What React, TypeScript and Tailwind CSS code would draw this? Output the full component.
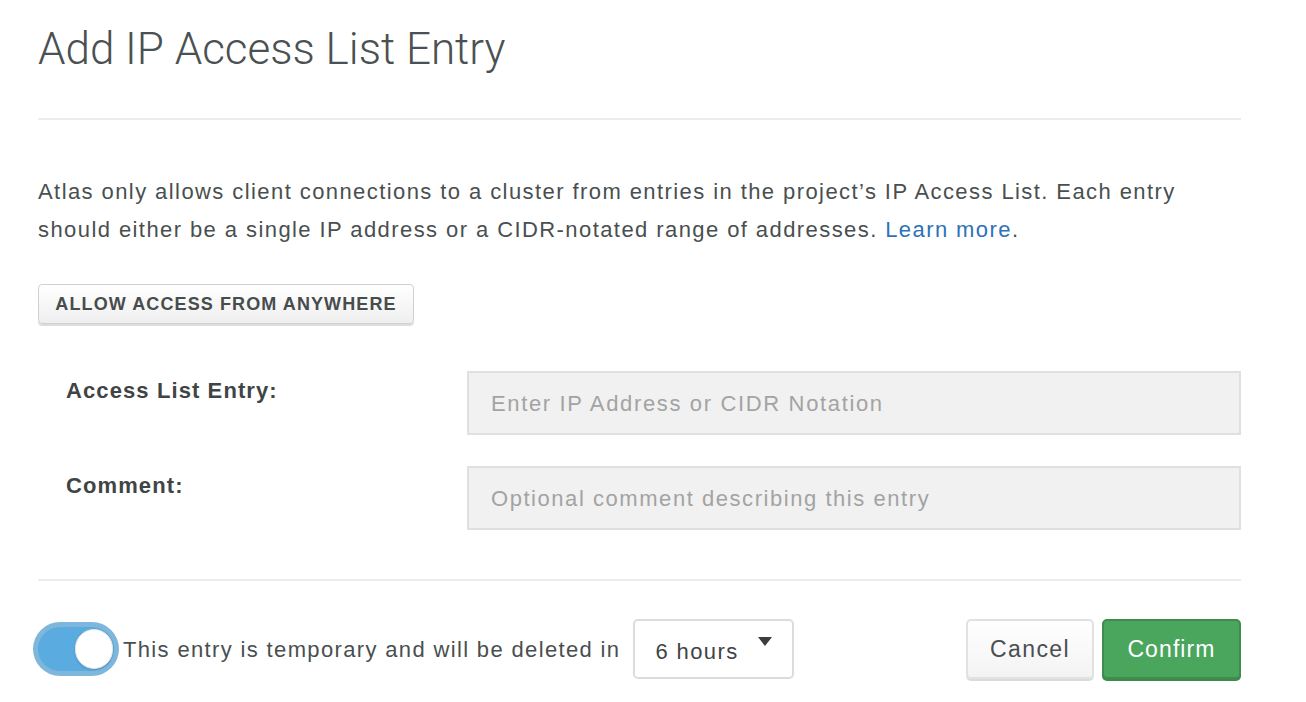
import React from "react";

export default function App() {
  const font = { fontFamily: '"Liberation Sans", Arial, sans-serif' };
  return (
    <div className="w-[1306px] h-[702px] bg-white overflow-hidden text-[#494f50]" style={font}>
      <div className="ml-[38px] w-[1203px] flex flex-col">
        <h1
          className="pt-[22px] text-[44px] leading-[54px] font-light text-[#4b5152] tracking-[0px]"
          style={{ fontFamily: 'Roboto, "Liberation Sans", sans-serif' }}
        >
          Add IP Access List Entry
        </h1>
        <div className="mt-[42px] h-[2px] bg-[#ececec]" />
        <p className="mt-[53px] text-[22px] leading-[38px] text-[#494f50] tracking-[1.42px] whitespace-nowrap">
          Atlas only allows client connections to a cluster from entries in the project’s IP Access List. Each entry
          <br />
          should either be a single IP address or a CIDR-notated range of addresses.{" "}
          <span className="text-[#2d72b8]">Learn more</span>.
        </p>
        <div className="mt-[35px]">
          <button className="h-[40px] w-[376px] rounded-[4px] border border-[#cfd1d1] bg-gradient-to-b from-white to-[#efefef] shadow-[0_2px_0_#dcdede] text-[18px] font-bold text-[#474c4d] tracking-[1.1px]">
            ALLOW ACCESS FROM ANYWHERE
          </button>
        </div>
        <div className="mt-[47px] flex flex-col gap-[31px]">
          <div className="flex items-start">
            <div className="w-[429px] pl-[28px] pt-[6px] text-[22px] font-bold text-[#3f4445] leading-[28px] tracking-[1.1px]">
              Access List Entry:
            </div>
            <div className="flex-1 h-[64px] bg-[#f1f1f1] border-2 border-[#e0e0e0] flex items-center pl-[22px] text-[22px] text-[#a3a3a3] tracking-[1.65px]">
              Enter IP Address or CIDR Notation
            </div>
          </div>
          <div className="flex items-start">
            <div className="w-[429px] pl-[28px] pt-[6px] text-[22px] font-bold text-[#3f4445] leading-[28px] tracking-[1.1px]">
              Comment:
            </div>
            <div className="flex-1 h-[64px] bg-[#f1f1f1] border-2 border-[#e0e0e0] flex items-center pl-[22px] text-[22px] text-[#a3a3a3] tracking-[1.55px]">
              Optional comment describing this entry
            </div>
          </div>
        </div>
        <div className="mt-[49px] h-[2px] bg-[#ececec]" />
        <div className="mt-[38px] flex items-center justify-between">
          <div className="flex items-center -ml-[5px]">
            <div className="w-[86px] h-[54px] rounded-full bg-[#7fb6dc] p-[5px]">
              <div className="w-full h-full rounded-full bg-[#5aabe0] flex items-center justify-end pr-[1px]">
                <div className="w-[38px] h-[40px] rounded-full bg-white border border-[#e4e4e4] shadow-[0_1px_2px_rgba(0,0,0,0.15)]" />
              </div>
            </div>
            <span className="ml-[4px] text-[22px] text-[#494f50] tracking-[1.35px] whitespace-nowrap">
              This entry is temporary and will be deleted in
            </span>
            <div className="ml-[13px] w-[161px] h-[60px] rounded-[5px] border-2 border-[#dcdcdc] bg-white flex items-center justify-between pl-[20px] pr-[20px]">
              <span className="text-[22px] text-[#3f4445] mt-[4px] tracking-[1.4px]">6 hours</span>
              <svg width="14" height="10" viewBox="0 0 14 10" className="-mt-[14px]">
                <polygon points="0,0 14,0 7,9" fill="#3a3e3f" />
              </svg>
            </div>
          </div>
          <div className="flex items-center gap-[8px]">
            <button className="w-[128px] h-[60px] rounded-[5px] border-2 border-[#e0e2e2] bg-gradient-to-b from-white to-[#f3f3f3] shadow-[0_2px_0_#dadcdc] text-[23px] text-[#494f50] tracking-[1.4px]">
              Cancel
            </button>
            <button className="w-[139px] h-[60px] rounded-[5px] border-2 border-[#3f8c4f] bg-[#4aa55d] shadow-[0_2px_0_#3d8a4c] text-[23px] text-white tracking-[1.1px]">
              Confirm
            </button>
          </div>
        </div>
      </div>
    </div>
  );
}
